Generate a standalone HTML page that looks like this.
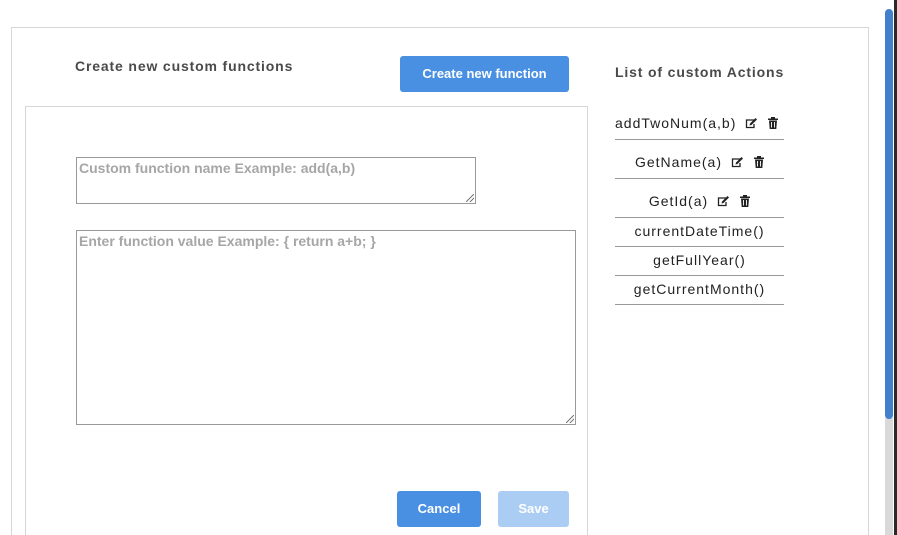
<!DOCTYPE html>
<html><head><meta charset="utf-8"><style>
*{box-sizing:border-box;margin:0;padding:0}
html,body{width:897px;height:535px;overflow:hidden}
body{background:#fff;position:relative;font-family:"Liberation Sans",Arial,sans-serif}
.abs{position:absolute}
.outer{left:11px;top:27px;width:858px;height:508px;border:1px solid #d6d6d6;border-bottom:none}
.inner{left:25px;top:106px;width:563px;height:429px;border:1px solid #d6d6d6;border-bottom:none}
.title{font-weight:bold;color:#4a4a4a;font-size:14px;letter-spacing:0.85px}
.btn{background:#4a90e2;color:#fff;border-radius:3px;font-weight:bold;font-size:13px;text-align:center}
.ta{border:1px solid #999;color:#a6a6a6;font-weight:bold;font-size:14px;padding:2px 2px}
.grip{position:absolute;right:1px;bottom:1px;width:8px;height:8px;background:linear-gradient(135deg,transparent 45%,#777 45%,#777 55%,transparent 55%,transparent 70%,#777 70%,#777 80%,transparent 80%)}
.item{left:615px;width:169px;border-bottom:1px solid #999;text-align:center;font-size:14px;color:#222;letter-spacing:1px}
.ic{display:inline-block;vertical-align:-1px;margin-left:9px}
</style></head><body>
<div class="abs outer"></div>
<div class="abs title" style="left:75px;top:58px">Create new custom functions</div>
<div class="abs btn" style="left:400px;top:56px;width:169px;height:36px;line-height:36px">Create new function</div>
<div class="abs title" style="left:615px;top:64px">List of custom Actions</div>
<div class="abs inner"></div>
<div class="abs ta" style="left:76px;top:157px;width:400px;height:47px">Custom function name Example: add(a,b)<div class="grip"></div></div>
<div class="abs ta" style="left:76px;top:230px;width:500px;height:195px">Enter function value Example: { return a+b; }<div class="grip"></div></div>
<div class="abs btn" style="left:397px;top:491px;width:84px;height:36px;line-height:36px">Cancel</div>
<div class="abs btn" style="left:498px;top:491px;width:71px;height:36px;line-height:36px;background:#abcdf3">Save</div>

<div class="abs item" style="top:110px;height:30px;line-height:26px;text-align:left">addTwoNum(a,b)<svg class="ic" width="13" height="12" viewBox="0 0 13 12"><path d="M9 3 H1.5 V10.5 H9 V7" fill="none" stroke="#222" stroke-width="1.3"/><path d="M4.5 8.5 L5 6.5 L10.5 1 L12 2.5 L6.5 8 Z" fill="#222"/></svg><svg class="ic" width="10" height="12" viewBox="0 0 10 12" style="margin-left:10px"><rect x="0" y="1.5" width="10" height="1.5" fill="#222"/><rect x="3" y="0" width="4" height="2" fill="#222"/><path d="M1 3.5 H9 L8.3 12 H1.7 Z" fill="#222"/><path d="M3.5 5 V10.5 M6.5 5 V10.5" stroke="#fff" stroke-width="0.9"/></svg></div>
<div class="abs item" style="top:140px;height:39px;line-height:44px">GetName(a)<svg class="ic" width="13" height="12" viewBox="0 0 13 12"><path d="M9 3 H1.5 V10.5 H9 V7" fill="none" stroke="#222" stroke-width="1.3"/><path d="M4.5 8.5 L5 6.5 L10.5 1 L12 2.5 L6.5 8 Z" fill="#222"/></svg><svg class="ic" width="10" height="12" viewBox="0 0 10 12" style="margin-left:10px"><rect x="0" y="1.5" width="10" height="1.5" fill="#222"/><rect x="3" y="0" width="4" height="2" fill="#222"/><path d="M1 3.5 H9 L8.3 12 H1.7 Z" fill="#222"/><path d="M3.5 5 V10.5 M6.5 5 V10.5" stroke="#fff" stroke-width="0.9"/></svg></div>
<div class="abs item" style="top:179px;height:39px;line-height:44px">GetId(a)<svg class="ic" width="13" height="12" viewBox="0 0 13 12"><path d="M9 3 H1.5 V10.5 H9 V7" fill="none" stroke="#222" stroke-width="1.3"/><path d="M4.5 8.5 L5 6.5 L10.5 1 L12 2.5 L6.5 8 Z" fill="#222"/></svg><svg class="ic" width="10" height="12" viewBox="0 0 10 12" style="margin-left:10px"><rect x="0" y="1.5" width="10" height="1.5" fill="#222"/><rect x="3" y="0" width="4" height="2" fill="#222"/><path d="M1 3.5 H9 L8.3 12 H1.7 Z" fill="#222"/><path d="M3.5 5 V10.5 M6.5 5 V10.5" stroke="#fff" stroke-width="0.9"/></svg></div>
<div class="abs item" style="top:218px;height:29px;line-height:26px">currentDateTime()</div>
<div class="abs item" style="top:247px;height:29px;line-height:26px">getFullYear()</div>
<div class="abs item" style="top:276px;height:29px;line-height:26px">getCurrentMonth()</div>

<div class="abs" style="left:885px;top:0;width:9px;height:535px;background:#fff"></div>
<div class="abs" style="left:885px;top:415px;width:8px;height:120px;background:#d9d9d9;border-radius:4px 4px 0 0"></div>
<div class="abs" style="left:885px;top:9px;width:8px;height:410px;background:#4180cc;border-radius:4px"></div>
<div class="abs" style="left:894px;top:0;width:3px;height:535px;background:#2a2a2a"></div>
</body></html>
